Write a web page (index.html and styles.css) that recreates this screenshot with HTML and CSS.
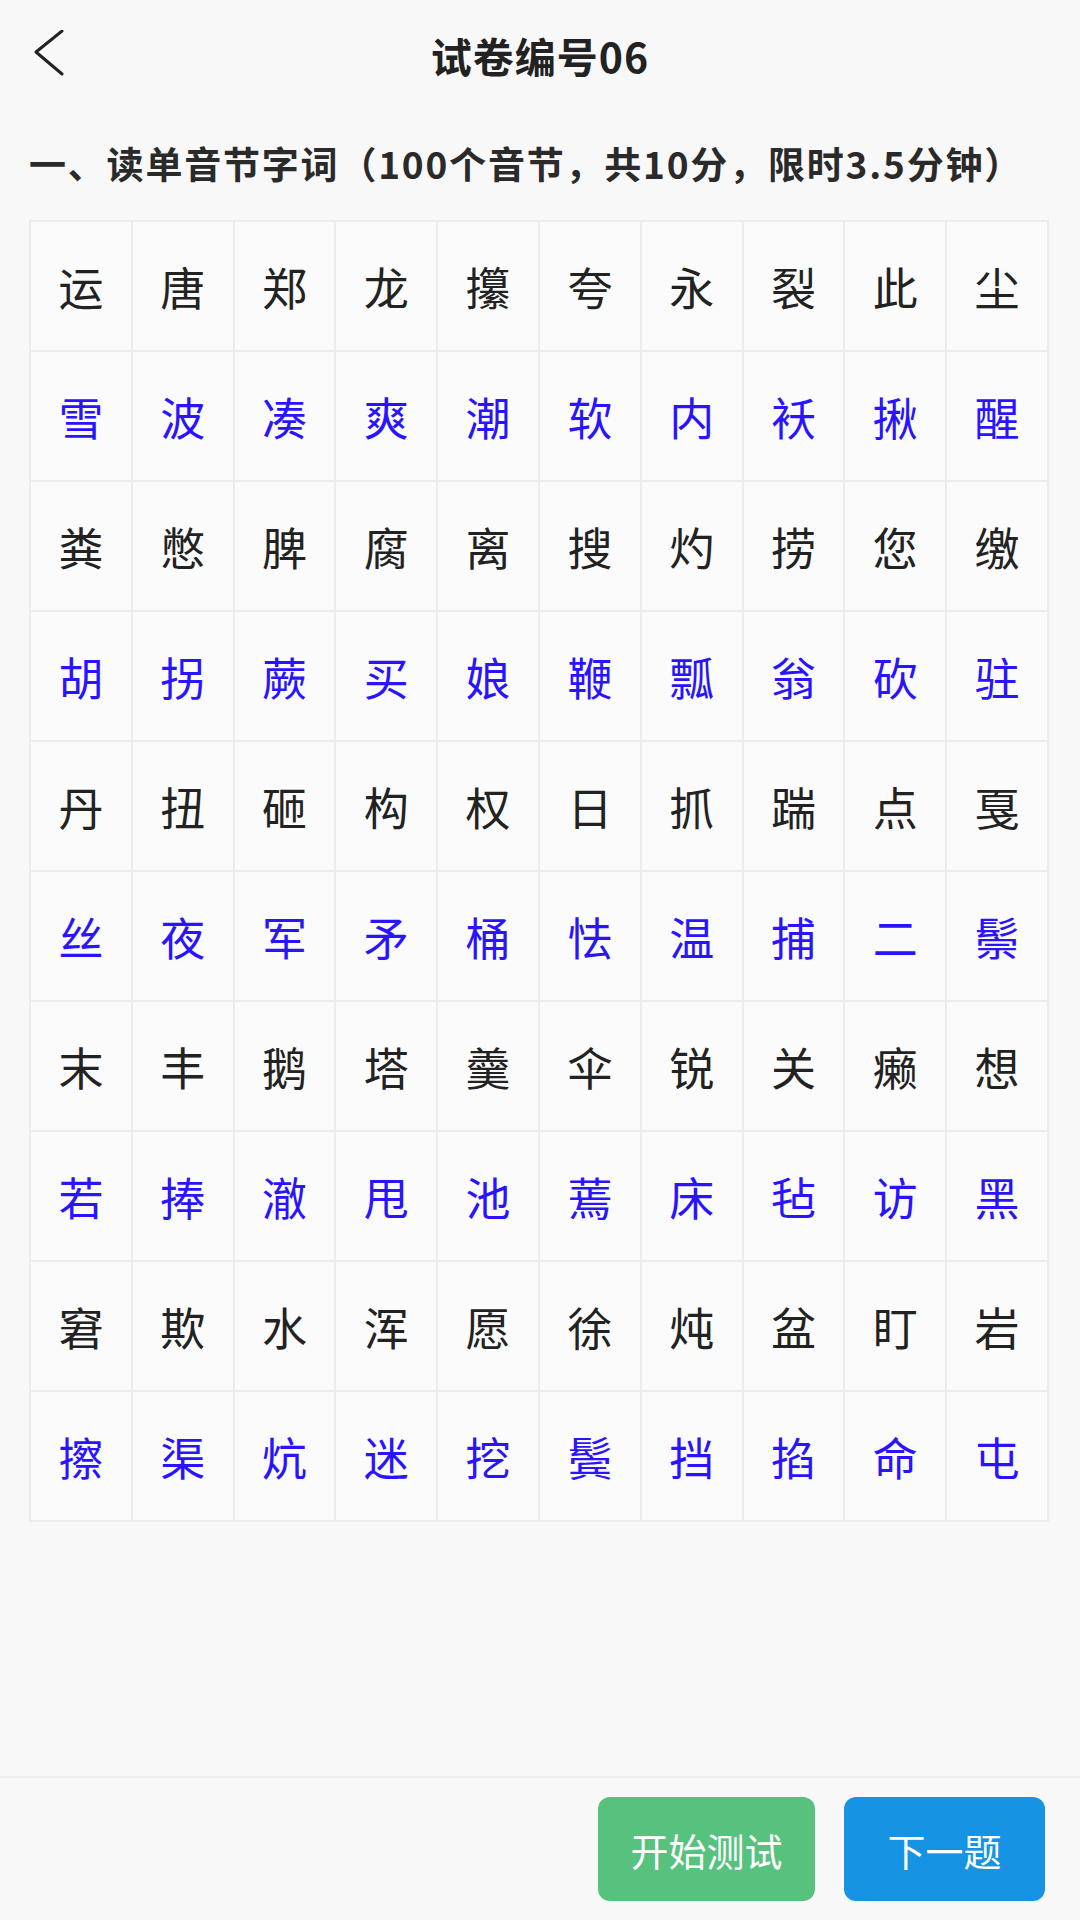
FILE: index.html
```html
<!DOCTYPE html>
<html lang="zh-CN">
<head>
    <meta charset="UTF-8">
    <meta name="viewport" content="width=device-width, initial-scale=1.0">
    <title>试卷编号06</title>
    <link rel="stylesheet" href="styles.css">
</head>
<body>
    <div class="page">
        <header class="top-bar">
            <a class="back-btn" href="#">
                <svg width="40" height="50" viewBox="0 0 40 50">
                    <polyline points="32,1 6,22 32,44" fill="none" stroke="#222" stroke-width="3" stroke-linecap="round" stroke-linejoin="round"/>
                </svg>
            </a>
            <h1 class="title">试卷编号06</h1>
            <span></span>
        </header>

        <h2 class="section-title">一、读单音节字词（100个音节，共10分，限时3.5分钟）</h2>

        <div class="char-grid" id="charGrid"></div>

        <div class="spacer"></div>

        <footer class="bottom-bar">
            <button class="btn btn-start">开始测试</button>
            <button class="btn btn-next">下一题</button>
        </footer>
    </div>

    <script>
        // 100个音节，每行10个
        const rows = [
            '运唐郑龙攥夸永裂此尘',
            '雪波凑爽潮软内袄揪醒',
            '粪憋脾腐离搜灼捞您缴',
            '胡拐蕨买娘鞭瓢翁砍驻',
            '丹扭砸构权日抓踹点戛',
            '丝夜军矛桶怯温捕二鬃',
            '末丰鹅塔羹伞锐关癞想',
            '若捧澈甩池蔫床毡访黑',
            '窘欺水浑愿徐炖盆盯岩',
            '擦渠炕迷挖鬓挡掐命屯'
        ];

        const grid = document.getElementById('charGrid');

        rows.forEach((row, i) => {
            Array.from(row).forEach((ch) => {
                const cell = document.createElement('div');
                cell.className = i % 2 === 0 ? 'cell' : 'cell cell-blue';
                cell.textContent = ch;
                grid.appendChild(cell);
            });
        });
    </script>
</body>
</html>
```

FILE: styles.css
```css
:root {
    --fondo: #f8f8f8;
    --celda: #fbfbfb;
    --linea: #ececec;
    --texto: #222;
    --azul-texto: #2a14ff;
    --verde: #57c17e;
    --azul: #1693e3;
}

* {
    margin: 0;
    padding: 0;
    box-sizing: border-box;
}

body {
    font-family: "Noto Sans CJK SC", "Noto Sans", sans-serif;
    background-color: var(--fondo);
    color: var(--texto);
}

.page {
    width: 1080px;
    height: 1920px;
    display: flex;
    flex-direction: column;
}

.top-bar {
    height: 110px;
    display: grid;
    grid-template-columns: 100px 1fr 100px;
    align-items: center;
}

.back-btn {
    display: flex;
    padding-left: 30px;
}

.title {
    text-align: center;
    font-size: 41px;
    font-weight: bold;
    letter-spacing: 1px;
    color: var(--texto);
}

.section-title {
    height: 110px;
    display: flex;
    align-items: center;
    padding: 0 0 4px 29px;
    font-size: 37px;
    font-weight: bold;
    letter-spacing: 1.8px;
    color: #2a2a2a;
    white-space: nowrap;
}

.char-grid {
    margin: 0 31px 0 29px;
    display: grid;
    grid-template-columns: repeat(10, 1fr);
    grid-auto-rows: 128px;
    gap: 2px;
    background-color: var(--linea);
    border: 2px solid var(--linea);
}

.cell {
    background-color: var(--celda);
    display: flex;
    align-items: center;
    justify-content: center;
    font-size: 45px;
    color: var(--texto);
}

.cell-blue {
    color: var(--azul-texto);
}

.spacer {
    flex-grow: 1;
}

.bottom-bar {
    height: 144px;
    border-top: 2px solid #ededed;
    display: flex;
    justify-content: flex-end;
    align-items: center;
    gap: 29px;
    padding: 0 35px 0 0;
}

.btn {
    height: 104px;
    border: none;
    border-radius: 12px;
    color: white;
    font-family: "Noto Sans CJK SC", sans-serif;
    font-size: 38px;
    cursor: pointer;
}

.btn-start {
    width: 217px;
    background-color: var(--verde);
}

.btn-next {
    width: 201px;
    background-color: var(--azul);
}
```
